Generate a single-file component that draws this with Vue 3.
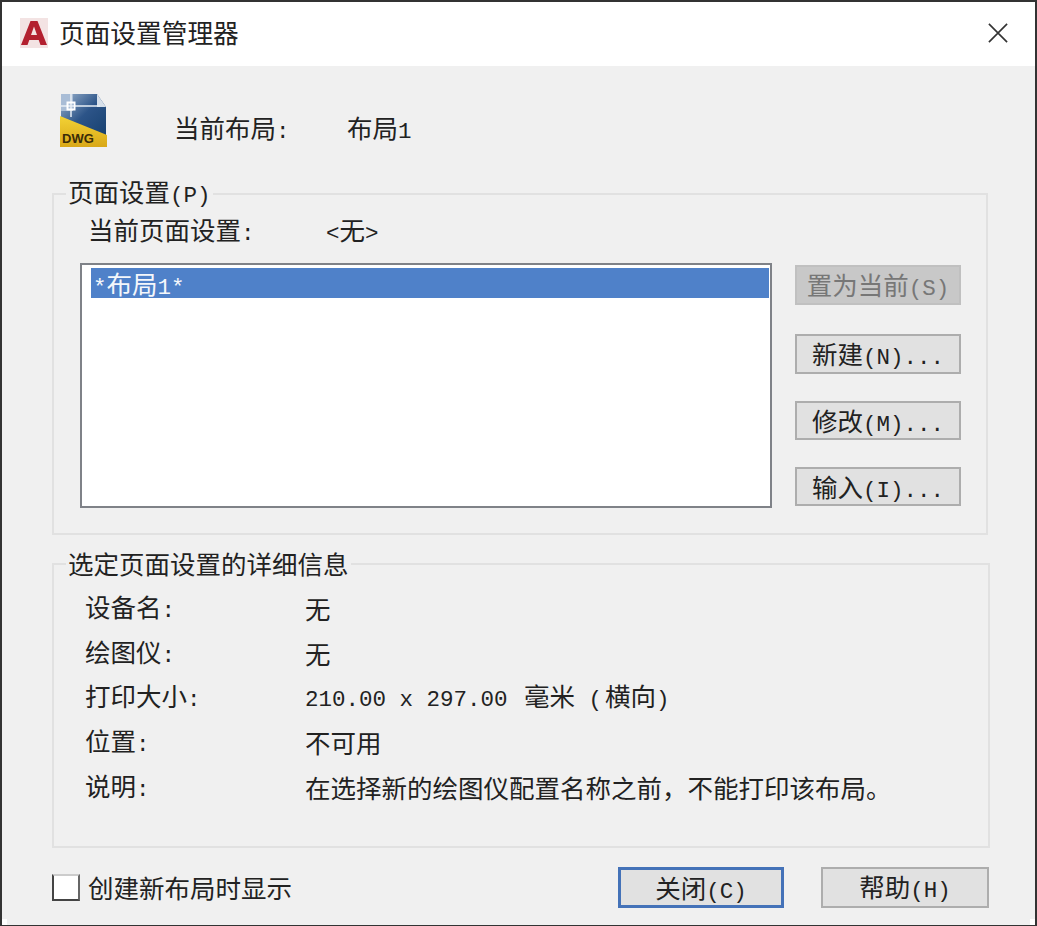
<template>
  <div class="dialog">
    <i v-for="c in corners" :key="c" class="corner" :class="c"></i>
    <header class="titlebar">
      <svg class="logo" viewBox="0 0 28 30">
        <rect width="28" height="30" fill="#f3e3e3" />
        <path d="M1 27 10.500 3h7L27 27h-6.500l-1.800-5H9.300l-1.800 5zM11 17h6l-3-8.500z" fill="#b3202f" fill-rule="evenodd" />
      </svg>
      <span class="title">页面设置管理器</span>
      <svg class="close" viewBox="0 0 22 22">
        <path d="M1 1 21 21M21 1 1 21" stroke="#333" stroke-width="1.800" fill="none" />
      </svg>
    </header>

    <main class="content">
      <div class="current">
        <svg class="dwg" viewBox="0 0 48 55">
          <defs>
            <linearGradient id="blue" x1="0" y1="0" x2="1" y2="1">
              <stop offset="0" stop-color="#9db4cf" />
              <stop offset="0.5" stop-color="#2c5488" />
              <stop offset="1" stop-color="#16406f" />
            </linearGradient>
            <linearGradient id="gold" x1="0" y1="0" x2="0" y2="1">
              <stop offset="0" stop-color="#f3d235" />
              <stop offset="1" stop-color="#d9a818" />
            </linearGradient>
          </defs>
          <path d="M1 1H37L46 14V44H1z" fill="url(#blue)" />
          <path d="M37 1 46 14H37z" fill="#d7e0ea" />
          <path d="M1 1H13V18H1z" fill="#a9bdd6" />
          <path d="M0 13H40M11 1V24" stroke="#e8eef5" stroke-width="1.500" />
          <rect x="7.500" y="9.500" width="7" height="7" fill="none" stroke="#fff" stroke-width="2" />
          <path d="M0 23 47 42V54H0z" fill="url(#gold)" />
          <text x="2" y="50" class="dwg-text">DWG</text>
        </svg>
        <span class="current-label">当前布局<span class="lat">:</span></span>
        <span>布局<span class="lat">1</span></span>
      </div>

      <fieldset class="group setup">
        <legend>页面设置<span class="lat">(P)</span></legend>
        <div class="setup-name">
          <span class="setup-label">当前页面设置<span class="lat">:</span></span>
          <span><span class="lat">&lt;</span>无<span class="lat">&gt;</span></span>
        </div>
        <div class="setup-body">
          <div class="listbox">
            <div class="list-item"><span class="lat">*</span>布局<span class="lat">1*</span></div>
          </div>
          <div class="actions">
            <button v-for="b in actions" :key="b.name" class="btn" :class="{ disabled: b.disabled }">
              {{ b.name }}<span class="lat">{{ b.key }}</span>
            </button>
          </div>
        </div>
      </fieldset>

      <fieldset class="group details">
        <legend>选定页面设置的详细信息</legend>
        <div v-for="row in details" :key="row.label" class="row">
          <span class="row-label">{{ row.label }}<span class="lat">:</span></span>
          <span v-if="row.label === '打印大小'">
            <span class="lat wide">210.00 x 297.00 </span>毫米<span class="lat wide"> (</span>横向<span class="lat">)</span>
          </span>
          <span v-else>{{ row.value }}</span>
        </div>
      </fieldset>

      <footer class="footer">
        <label class="check"><span class="box"></span>创建新布局时显示</label>
        <button class="btn footer-btn primary">关闭<span class="lat">(C)</span></button>
        <button class="btn footer-btn help">帮助<span class="lat">(H)</span></button>
      </footer>
    </main>
  </div>
</template>

<script setup>
const corners = ["tl", "tr", "bl", "br"];

const actions = [
  { name: "置为当前", key: "(S)", disabled: true },
  { name: "新建", key: "(N)..." },
  { name: "修改", key: "(M)..." },
  { name: "输入", key: "(I)..." },
];

const details = [
  { label: "设备名", value: "无" },
  { label: "绘图仪", value: "无" },
  { label: "打印大小", value: "" },
  { label: "位置", value: "不可用" },
  { label: "说明", value: "在选择新的绘图仪配置名称之前，不能打印该布局。" },
];
</script>

<style>
html,
body {
  background: #fff;
}
</style>

<style scoped>
.dialog {
  position: relative;
  box-sizing: border-box;
  width: 1037px;
  height: 926px;
  display: flex;
  flex-direction: column;
  background: #f0f0f0;
  border: 2px solid #333;
  border-bottom-width: 1px;
  color: #222;
  font-family: "Noto Sans CJK SC", "Liberation Sans", sans-serif;
  font-size: 25.500px;
  line-height: 30px;
  overflow: hidden;
}
.corner {
  position: absolute;
  width: 7px;
  height: 7px;
  background: #fff;
}
.tl {
  top: -2px;
  left: -2px;
}
.tr {
  top: -2px;
  right: -2px;
}
.bl {
  bottom: -1px;
  left: -2px;
}
.br {
  bottom: -1px;
  right: -2px;
}
.lat {
  font-family: "Liberation Mono", monospace;
  font-size: 22.500px;
}
.wide {
  margin-right: 3px;
}
.titlebar {
  flex: none;
  box-sizing: border-box;
  height: 64px;
  display: flex;
  align-items: center;
  padding: 0 27px 2px 18px;
  background: #fff;
}
.logo {
  width: 28px;
  height: 30px;
  margin-right: 11px;
}
.title {
  flex: 1;
  padding-bottom: 2px;
  font-size: 25.700px;
}
.close {
  width: 20px;
  height: 20px;
}
.content {
  flex: 1;
  padding: 0 0 0 50px;
}
.current {
  height: 103px;
  display: flex;
  align-items: center;
  padding: 24px 0 0 8px;
  box-sizing: border-box;
}
.dwg {
  width: 48px;
  height: 55px;
  margin: -18px 66px 0 0;
}
.dwg-text {
  font: bold 13px "Liberation Sans", sans-serif;
  fill: #3a2c08;
}
.current-label {
  width: 173px;
}
.group {
  box-sizing: border-box;
  margin: 0;
  min-width: 0;
  border: 2px solid #e1e1e1;
  padding: 0;
}
.group legend {
  margin-left: 12px;
  padding: 0 2px 1px;
  line-height: 30px;
}
.setup {
  width: 936px;
  height: 359px;
  margin-top: 7px;
}
.setup-name {
  display: flex;
  padding-left: 34px;
  margin-top: 2px;
  height: 30px;
}
.setup-label {
  width: 238px;
}
.setup-body {
  display: flex;
  margin: 19px 0 0 26px;
}
.listbox {
  box-sizing: border-box;
  width: 692px;
  height: 245px;
  padding: 3px 1px 3px 9px;
  background: #fff;
  border: 2px solid #7f8288;
}
.list-item {
  height: 30px;
  background: #4f81c9;
  color: #f4f7fb;
  padding-left: 2px;
  line-height: 29px;
}
.actions {
  display: flex;
  flex-direction: column;
  gap: 27px;
  margin: 2px 0 0 23px;
}
.actions .btn:first-child {
  margin-bottom: 2px;
}
.actions .btn:nth-child(n + 3) {
  height: 39px;
}
.btn {
  box-sizing: border-box;
  width: 166px;
  height: 40px;
  padding: 0;
  background: #e1e1e1;
  border: 2px solid #adadad;
  color: #222;
  font: inherit;
  line-height: 34px;
}
.btn.disabled {
  background: #c8c8c8;
  border-color: #c0c0c0;
  color: #777;
}
.details {
  width: 938px;
  height: 300px;
  margin-top: 13px;
}
.row {
  display: flex;
  height: 44.700px;
  align-items: center;
  padding-left: 31px;
}
.row:first-of-type {
  margin-top: 7px;
}
.row-label {
  width: 220px;
}
.footer {
  display: flex;
  align-items: center;
  margin-top: 18px;
  height: 42px;
}
.check {
  display: flex;
  align-items: center;
  width: 566px;
}
.box {
  box-sizing: border-box;
  width: 28px;
  height: 27px;
  margin-right: 8px;
  background: #fff;
  border: 2px solid #444;
  border-top-color: #ccc;
  border-right-color: #666;
}
.footer-btn {
  height: 41px;
}
.primary {
  border: 3px solid #4472b8;
  margin-right: 37px;
}
.help {
  width: 168px;
}
</style>
